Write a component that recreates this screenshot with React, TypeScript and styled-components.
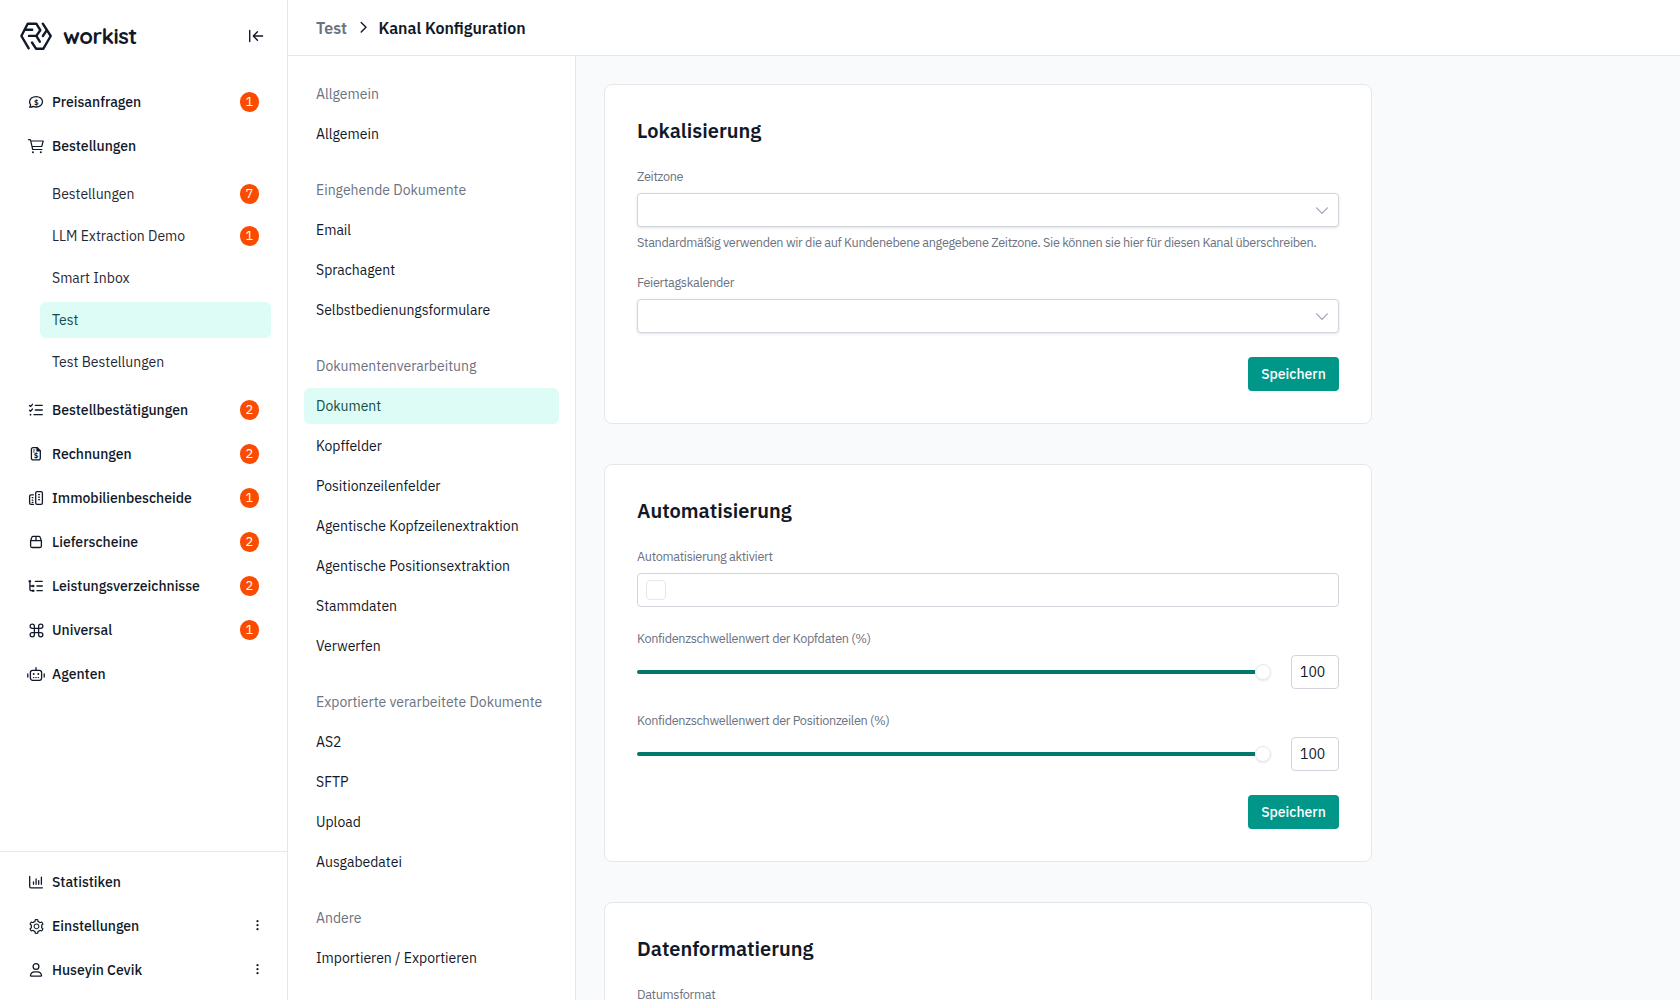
import React from "react";
import styled, { createGlobalStyle, css } from "styled-components";
import { Command } from "lucide-react";
import { AiOutlineSetting } from "react-icons/ai";

const c = {
  ink: "#111827",
  sub: "#1f2937",
  muted: "#6b7280",
  line: "#e5e7eb",
  field: "#d1d5db",
  teal: "#009688",
  tealDark: "#00796b",
  mint: "#dcfcf5",
  mintInk: "#134e4a",
  orange: "#fa4b00",
};

const GlobalStyle = createGlobalStyle`
  *, *::before, *::after { box-sizing: border-box; }
  body {
    margin: 0;
    overflow: hidden;
    background: #fff;
    color: ${c.ink};
    font-family: "IBM Plex Sans", Roboto, sans-serif;
    font-size: 14px;
    line-height: 20px;
  }
`;

const Layout = styled.div`
  display: grid;
  grid-template-columns: 288px 1fr;
  height: 1000px;
  overflow: hidden;
`;

const Sidebar = styled.aside`
  display: flex;
  flex-direction: column;
  min-height: 0;
  border-right: 1px solid ${c.line};
`;

const Brand = styled.div`
  display: flex;
  align-items: center;
  height: 72px;
  padding: 0 23px 0 20px;
`;

const BrandName = styled.span`
  margin: 0 auto 0 11px;
  font-family: Quicksand, Lato, sans-serif;
  font-size: 22px;
  font-weight: 700;
  line-height: 28px;
  letter-spacing: -0.55px;
`;

const Nav = styled.nav`
  display: flex;
  flex: 1;
  flex-direction: column;
  gap: 8px;
  padding: 12px 16px;
`;

const FooterNav = styled.nav`
  display: flex;
  flex-direction: column;
  gap: 8px;
  padding: 12px 16px;
  border-top: 1px solid ${c.line};
`;

const rowBase = css`
  display: flex;
  align-items: center;
  height: 36px;
  border-radius: 6px;
  color: inherit;
  text-decoration: none;
  white-space: nowrap;
`;

const NavItem = styled.a`
  ${rowBase}
  gap: 7px;
  padding: 0 12px 0 11px;
  font-weight: 500;

  svg {
    flex: none;
    overflow: visible;
  }
`;

const IconSlot = styled.span`
  display: grid;
  flex: none;
  place-items: center;
  width: 18px;
  height: 18px;
`;

const SubList = styled.div`
  display: flex;
  flex-direction: column;
  gap: 6px;
  margin: 4px 0 4px 24px;
`;

const SubItem = styled.a<{ $active?: boolean }>`
  ${rowBase}
  padding: 0 12px;
  color: ${(p) => (p.$active ? c.mintInk : c.sub)};
  background: ${(p) => (p.$active ? c.mint : "transparent")};
`;

const Badge = styled.span`
  display: grid;
  place-items: center;
  width: 19px;
  height: 20px;
  margin-left: auto;
  padding-bottom: 1px;
  border-radius: 10px;
  background: ${c.orange};
  color: #fff;
  font-size: 13px;
  font-weight: 400;
  line-height: 19px;
`;

const Kebab = styled.svg`
  margin-left: auto;
`;

const Page = styled.div`
  display: flex;
  flex-direction: column;
  min-width: 0;
  min-height: 0;
`;

const Header = styled.header`
  display: flex;
  align-items: center;
  flex: none;
  height: 56px;
  padding: 0 28px;
  border-bottom: 1px solid ${c.line};
  font-size: 16px;
  font-weight: 600;
  line-height: 24px;
`;

const Crumb = styled.span<{ $current?: boolean }>`
  color: ${(p) => (p.$current ? c.ink : c.muted)};
`;

const CrumbArrow = styled.svg`
  margin: 0 7.5px 0 8px;
`;

const Body = styled.div`
  display: grid;
  grid-template-columns: 288px 1fr;
  flex: 1;
  min-height: 0;
`;

const Sections = styled.nav`
  display: flex;
  flex-direction: column;
  gap: 20px;
  padding: 20px 16px;
  border-right: 1px solid ${c.line};
`;

const Section = styled.div`
  display: flex;
  flex-direction: column;
  gap: 4px;
`;

const SectionTitle = styled.div`
  ${rowBase}
  padding: 0 12px;
  color: ${c.muted};
`;

const SectionLink = styled.a<{ $active?: boolean }>`
  ${rowBase}
  padding: 0 12px;
  color: ${(p) => (p.$active ? c.mintInk : c.ink)};
  background: ${(p) => (p.$active ? c.mint : "transparent")};
`;

const Content = styled.main`
  display: flex;
  flex-direction: column;
  gap: 40px;
  padding: 28px;
  overflow: hidden;
  background: #f9fafc;
`;

const Card = styled.section`
  display: flex;
  flex: none;
  flex-direction: column;
  gap: 24px;
  width: 768px;
  padding: 32px;
  border: 1px solid ${c.line};
  border-radius: 8px;
  background: #fff;
`;

const CardTitle = styled.h2`
  margin: 0;
  font-size: 20px;
  font-weight: 600;
  line-height: 28px;
`;

const Field = styled.div`
  display: flex;
  flex-direction: column;
`;

const Caption = styled.div`
  margin-top: -1px;
  padding-bottom: 9px;
  color: ${c.muted};
  font-size: 12.7px;
  line-height: 16px;
  letter-spacing: -0.335px;
  white-space: nowrap;
`;

const Help = styled(Caption)`
  margin: 0;
  padding: 7px 0 1px;
`;

const Box = styled.div<{ $raised?: boolean }>`
  display: flex;
  align-items: center;
  height: 34px;
  padding: 0 10px 0 8px;
  border: 1px solid ${c.field};
  border-radius: 4px;
  background: #fff;
  box-shadow: ${(p) => (p.$raised ? "0 1px 3px rgba(17, 24, 39, 0.12)" : "none")};
`;

const SelectArrow = styled.svg`
  margin-left: auto;
`;

const Checkbox = styled.span`
  width: 20px;
  height: 20px;
  border: 1px solid ${c.line};
  border-radius: 4px;
`;

const SliderRow = styled.div`
  display: flex;
  align-items: center;
  gap: 20px;
`;

const Slider = styled.div`
  display: flex;
  flex: 1;
  align-items: center;
`;

const Track = styled.span`
  flex: 1;
  height: 4px;
  border-radius: 2px 0 0 2px;
  background: ${c.tealDark};
`;

const Thumb = styled.span`
  width: 16px;
  height: 16px;
  border: 1px solid ${c.line};
  border-radius: 50%;
  background: #fff;
  box-shadow: 0 1px 2px rgba(17, 24, 39, 0.1);
`;

const NumberBox = styled(Box)`
  width: 48px;
  padding: 0 8px;
`;

const SaveButton = styled.button`
  align-self: flex-end;
  width: 91px;
  height: 34px;
  padding: 0;
  border: 0;
  border-radius: 4px;
  background: ${c.teal};
  color: #fff;
  font: 500 14px/20px "IBM Plex Sans", Roboto, sans-serif;
`;

const Glyph = ({ children }: { children: React.ReactNode }) => (
  <svg width="18" height="18" viewBox="0 0 18 18" fill="none" stroke="currentColor" strokeWidth="1.3" strokeLinecap="round" strokeLinejoin="round">
    {children}
  </svg>
);

const DollarText = styled.text`
  fill: currentColor;
  stroke: none;
  font-family: "IBM Plex Sans", Roboto, sans-serif;
  font-weight: 700;
`;

const icons = {
  bubble: (
    <Glyph>
      <path d="M2.6 14.2c.8-.7 1.100-1.500 1-2.400C2.900 11 2.600 9.900 2.600 8.800c0-2.900 2.900-5.200 6.500-5.200s6.400 2.300 6.400 5.200-2.800 5.200-6.400 5.200c-1 0-2-.2-2.800-.6-1 .6-2.300.9-3.700.8z" />
      <DollarText x="9.2" y="11.5" fontSize="7.6" textAnchor="middle">$</DollarText>
    </Glyph>
  ),
  cart: (
    <Glyph>
      <path d="M1.500 2.700h1.300c.5 0 .7.300.8.700L5.700 12.500h9.200M3.800 4h12.400l-1.500 5.500H5.200" strokeWidth="1.2" />
      <circle cx="5.9" cy="15.200" r="1" fill="currentColor" stroke="none" />
      <circle cx="13.8" cy="15.200" r="1" fill="currentColor" stroke="none" />
    </Glyph>
  ),
  checks: (
    <Glyph>
      <path d="M8.300 4.300h7M8.300 9h7M7 13.700h8.300M2.500 4.500l1.100 1 1.900-2.200M2.500 9.200l1.100 1 1.900-2.200" />
      <circle cx="3.5" cy="13.7" r=".9" fill="currentColor" stroke="none" />
    </Glyph>
  ),
  invoice: (
    <Glyph>
      <path d="M6 2.700h4.300l3 3v7.600a1.600 1.600 0 0 1-1.600 1.600H6a1.600 1.600 0 0 1-1.600-1.600V4.300A1.600 1.600 0 0 1 6 2.700z" />
      <path d="M10 2.900v3h3" fill="currentColor" />
      <path d="M6.300 5h1.400M6.300 7h1" strokeWidth=".9" />
      <DollarText x="9.1" y="13.200" fontSize="7.6" textAnchor="middle">$</DollarText>
    </Glyph>
  ),
  buildings: (
    <Glyph>
      <rect x="8.7" y="2.700" width="6.700" height="12.700" rx="1.400" />
      <path d="M6.400 5.800H4a1.400 1.400 0 0 0-1.400 1.400V14A1.400 1.400 0 0 0 4 15.400h2.400" />
      <path d="M11.600 5.700h.9M11.600 8.200h.9M11.600 10.700h.9M5.200 8.700h.7M5.200 11.200h.7M5.200 13.400h.7" strokeWidth="1.200" />
    </Glyph>
  ),
  box: (
    <Glyph>
      <path d="M3.600 7.700v5.300a1.500 1.500 0 0 0 1.500 1.500h7.800a1.500 1.500 0 0 0 1.500-1.500V7.700zM3.600 7.700l1.200-3.300a1.500 1.500 0 0 1 1.400-1h5.600a1.500 1.500 0 0 1 1.400 1l1.200 3.300M9 3.400v4.300" />
    </Glyph>
  ),
  tree: (
    <Glyph>
      <path d="M8.300 4.300h7M10 9h5.300M10 13.700h5.300M2.900 4.300v8a1.400 1.400 0 0 0 1.400 1.400h1.500M2.900 9h3" />
      <path d="M2.200 3.500h1.500v1.500H2.200zM5.600 8.300h1.500v1.500H5.600zM5.600 13h1.500v1.500H5.600z" fill="currentColor" strokeWidth=".6" />
    </Glyph>
  ),
  command: <Command size={17} strokeWidth={1.8} />,
  robot: (
    <Glyph>
      <rect x="3.400" y="5.300" width="11.200" height="10" rx="2.200" />
      <path d="M9 2.600v2.700M.8 9v3M17.200 9v3" />
      <path d="M6.700 9h.01M11.300 9h.01" strokeWidth="1.9" />
      <path d="M6.300 12.600h.6M8.700 12.600h.6M11.100 12.600h.6" strokeWidth="1" />
    </Glyph>
  ),
  chart: (
    <Glyph>
      <path d="M2.700 3.500v10a1.300 1.300 0 0 0 1.300 1.300h11.400M6.500 8.800v2.500M9.100 5.900v5.400M11.700 7.600v3.700M14.400 4.200v7.100" />
    </Glyph>
  ),
  gear: <AiOutlineSetting size={17} />,
  user: (
    <Glyph>
      <circle cx="9" cy="5.500" r="2.900" />
      <path d="M4.400 15.200c-.7 0-1-.5-.9-1.100.4-2 2-3.300 4-3.300h3c2 0 3.600 1.300 4 3.300.1.600-.2 1.100-.9 1.100z" />
    </Glyph>
  ),
};

type IconName = keyof typeof icons;

const Logo = () => (
  <svg width="32" height="28" viewBox="0 0 32 28" fill="none" stroke="currentColor" strokeWidth="2.4" strokeLinecap="round" strokeLinejoin="round">
    <path d="M8.700 26.300 1.400 14 7.700 1.700h8.600l4 6.500-4 5.700H9" />
    <path d="M6 7.700h6.200M16.300 13.900l3.500 5.800" />
    <path d="M22.800 1.700 30.700 14l-7.300 12.700H16L12 20.500" />
    <path d="M26.800 8.200 22.900 14" />
  </svg>
);

const CollapseIcon = () => (
  <svg width="16" height="14" viewBox="0 0 16 14" fill="none" stroke="currentColor" strokeWidth="1.4" strokeLinecap="round" strokeLinejoin="round">
    <path d="M1.700 1.500v11M14.600 7H5.500M9.500 2.800 5.300 7l4.200 4.200" />
  </svg>
);

const Dots = () => (
  <Kebab width="4" height="12" viewBox="0 0 4 12" fill="currentColor">
    <circle cx="2.500" cy="1.200" r="1.100" />
    <circle cx="2.500" cy="5.200" r="1.100" />
    <circle cx="2.500" cy="9.200" r="1.100" />
  </Kebab>
);

const Entry = ({ icon, label, count, menu }: { icon: IconName; label: string; count?: number; menu?: boolean }) => (
  <NavItem>
    <IconSlot>{icons[icon]}</IconSlot>
    {label}
    {count !== undefined && <Badge>{count}</Badge>}
    {menu && <Dots />}
  </NavItem>
);

const orderChannels: { label: string; count?: number; active?: boolean }[] = [
  { label: "Bestellungen", count: 7 },
  { label: "LLM Extraction Demo", count: 1 },
  { label: "Smart Inbox" },
  { label: "Test", active: true },
  { label: "Test Bestellungen" },
];

const lowerEntries: { icon: IconName; label: string; count?: number }[] = [
  { icon: "checks", label: "Bestellbestätigungen", count: 2 },
  { icon: "invoice", label: "Rechnungen", count: 2 },
  { icon: "buildings", label: "Immobilienbescheide", count: 1 },
  { icon: "box", label: "Lieferscheine", count: 2 },
  { icon: "tree", label: "Leistungsverzeichnisse", count: 2 },
  { icon: "command", label: "Universal", count: 1 },
  { icon: "robot", label: "Agenten" },
];

const sections = [
  { title: "Allgemein", links: ["Allgemein"] },
  { title: "Eingehende Dokumente", links: ["Email", "Sprachagent", "Selbstbedienungsformulare"] },
  {
    title: "Dokumentenverarbeitung",
    links: [
      "Dokument",
      "Kopffelder",
      "Positionzeilenfelder",
      "Agentische Kopfzeilenextraktion",
      "Agentische Positionsextraktion",
      "Stammdaten",
      "Verwerfen",
    ],
  },
  { title: "Exportierte verarbeitete Dokumente", links: ["AS2", "SFTP", "Upload", "Ausgabedatei"] },
  { title: "Andere", links: ["Importieren / Exportieren"] },
];

const SelectField = ({ label, help }: { label: string; help?: string }) => (
  <Field>
    <Caption>{label}</Caption>
    <Box $raised>
      <SelectArrow width="12" height="8" viewBox="0 0 12 8" fill="none" stroke="#9ca3af" strokeWidth="1.2" strokeLinecap="round" strokeLinejoin="round">
        <path d="M.6 1.900 6 7.300l5.400-5.400" />
      </SelectArrow>
    </Box>
    {help && <Help>{help}</Help>}
  </Field>
);

const SliderField = ({ label, value }: { label: string; value: number }) => (
  <Field>
    <Caption>{label}</Caption>
    <SliderRow>
      <Slider>
        <Track />
        <Thumb />
      </Slider>
      <NumberBox>{value}</NumberBox>
    </SliderRow>
  </Field>
);

export default function App() {
  return (
    <>
      <GlobalStyle />
      <Layout>
        <Sidebar>
          <Brand>
            <Logo />
            <BrandName>workist</BrandName>
            <CollapseIcon />
          </Brand>
          <Nav>
            <Entry icon="bubble" label="Preisanfragen" count={1} />
            <Entry icon="cart" label="Bestellungen" />
            <SubList>
              {orderChannels.map((ch) => (
                <SubItem key={ch.label} $active={ch.active}>
                  {ch.label}
                  {ch.count !== undefined && <Badge>{ch.count}</Badge>}
                </SubItem>
              ))}
            </SubList>
            {lowerEntries.map((e) => (
              <Entry key={e.label} {...e} />
            ))}
          </Nav>
          <FooterNav>
            <Entry icon="chart" label="Statistiken" />
            <Entry icon="gear" label="Einstellungen" menu />
            <Entry icon="user" label="Huseyin Cevik" menu />
          </FooterNav>
        </Sidebar>
        <Page>
          <Header>
            <Crumb>Test</Crumb>
            <CrumbArrow width="16" height="16" viewBox="0 0 16 16" fill="none" stroke="currentColor" strokeWidth="1.4" strokeLinecap="round" strokeLinejoin="round">
              <path d="M6.200 2.500 11 7.300 6.200 12.100" />
            </CrumbArrow>
            <Crumb $current>Kanal Konfiguration</Crumb>
          </Header>
          <Body>
            <Sections>
              {sections.map((s) => (
                <Section key={s.title}>
                  <SectionTitle>{s.title}</SectionTitle>
                  {s.links.map((l) => (
                    <SectionLink key={l} $active={l === "Dokument"}>
                      {l}
                    </SectionLink>
                  ))}
                </Section>
              ))}
            </Sections>
            <Content>
              <Card>
                <CardTitle>Lokalisierung</CardTitle>
                <SelectField
                  label="Zeitzone"
                  help="Standardmäßig verwenden wir die auf Kundenebene angegebene Zeitzone. Sie können sie hier für diesen Kanal überschreiben."
                />
                <SelectField label="Feiertagskalender" />
                <SaveButton>Speichern</SaveButton>
              </Card>
              <Card>
                <CardTitle>Automatisierung</CardTitle>
                <Field>
                  <Caption>Automatisierung aktiviert</Caption>
                  <Box>
                    <Checkbox />
                  </Box>
                </Field>
                <SliderField label="Konfidenzschwellenwert der Kopfdaten (%)" value={100} />
                <SliderField label="Konfidenzschwellenwert der Positionzeilen (%)" value={100} />
                <SaveButton>Speichern</SaveButton>
              </Card>
              <Card>
                <CardTitle>Datenformatierung</CardTitle>
                <SelectField label="Datumsformat" />
              </Card>
            </Content>
          </Body>
        </Page>
      </Layout>
    </>
  );
}
